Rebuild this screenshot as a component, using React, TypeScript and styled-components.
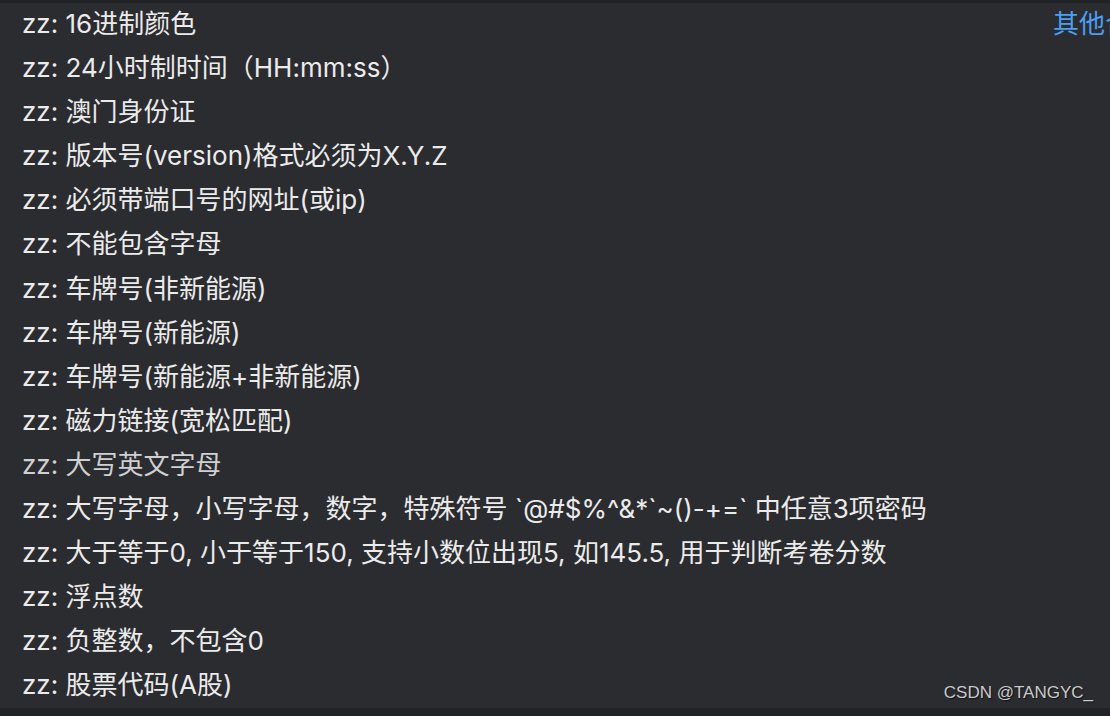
import React from "react";
import styled, { createGlobalStyle } from "styled-components";

const GlobalStyle = createGlobalStyle`
  html, body {
    margin: 0;
    padding: 0;
    background: #222326;
    overflow: hidden;
  }
`;

const Page = styled.div({
  position: "relative",
  width: 1110,
  height: 716,
  display: "flex",
  flexDirection: "column",
  background: "#222326",
  fontFamily: 'Inter, "Noto Sans CJK SC", sans-serif',
  overflow: "hidden",
});

const Panel = styled.div({
  marginTop: 3,
  height: 705,
  display: "flex",
  background: "#2b2c2f",
});

const List = styled.ul({
  listStyle: "none",
  margin: "-1px 0 0",
  padding: "0 0 0 22px",
  width: 1031,
  flexShrink: 0,
});

const Item = styled.li<{ $dim?: boolean }>`
  height: 44.1px;
  line-height: 44px;
  font-size: 26px;
  white-space: nowrap;
  color: ${(p) => (p.$dim ? "#cfd0d2" : "#ebebec")};
`;

const Side = styled.div({
  flex: 1,
  overflow: "hidden",
  whiteSpace: "nowrap",
  lineHeight: "44px",
  marginTop: -1,
});

const Link = styled.a({
  color: "#4b9ef3",
  fontSize: 26,
  textDecoration: "none",
  cursor: "pointer",
});

const Watermark = styled.div({
  position: "absolute",
  right: 17,
  bottom: 13,
  fontFamily: '"Liberation Sans", Arial, sans-serif',
  fontSize: 17,
  color: "#c9cacc",
  textShadow: "1px 1px 1px rgba(0,0,0,0.6)",
});

const rules = [
  "16进制颜色",
  "24小时制时间（HH:mm:ss）",
  "澳门身份证",
  "版本号(version)格式必须为X.Y.Z",
  "必须带端口号的网址(或ip)",
  "不能包含字母",
  "车牌号(非新能源)",
  "车牌号(新能源)",
  "车牌号(新能源+非新能源)",
  "磁力链接(宽松匹配)",
  "大写英文字母",
  "大写字母，小写字母，数字，特殊符号 `@#$%^&*`~()-+=` 中任意3项密码",
  "大于等于0, 小于等于150, 支持小数位出现5, 如145.5, 用于判断考卷分数",
  "浮点数",
  "负整数，不包含0",
  "股票代码(A股)",
];

export default function App() {
  return (
    <Page>
      <GlobalStyle />
      <Panel>
        <List>
          {rules.map((r, i) => (
            <Item key={i} $dim={i === 10}>
              zz: {r}
            </Item>
          ))}
        </List>
        <Side>
          <Link>其他合法</Link>
        </Side>
      </Panel>
      <Watermark>CSDN @TANGYC_</Watermark>
    </Page>
  );
}
